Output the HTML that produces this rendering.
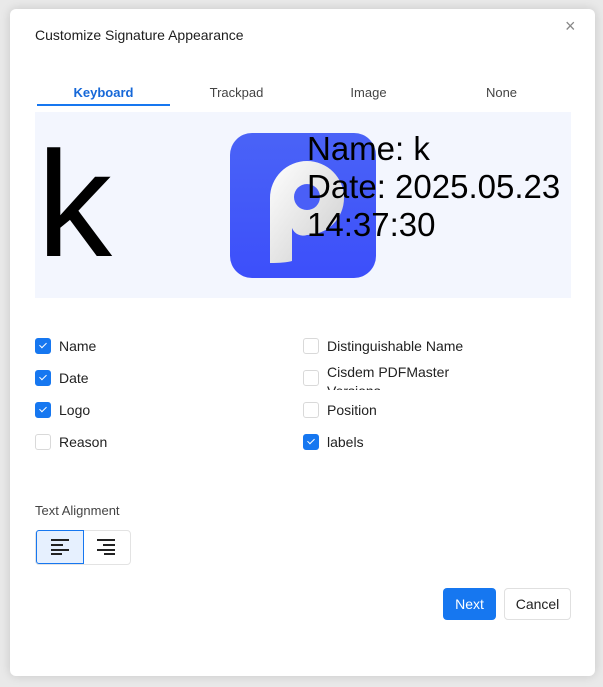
<!DOCTYPE html>
<html><head><style>
body{margin:0;width:603px;height:687px;background:#e9e9e9;position:relative;overflow:hidden;font-family:"Liberation Sans",sans-serif;color:#222;}
.dlg{position:absolute;left:10px;top:9px;width:585px;height:667px;background:#fff;border-radius:6px;box-shadow:0 0 10px rgba(0,0,0,.15);}
.a{position:absolute;}
.cb{position:absolute;width:14px;height:14px;border:1px solid #d9d9d9;border-radius:3px;background:#fff;}
.cb.on{background:#1677f0;border-color:#1677f0;}
.cb.on::after{content:"";position:absolute;left:4.5px;top:2px;width:3px;height:6px;border:solid #fff;border-width:0 1.6px 1.6px 0;transform:rotate(45deg);}
.lb{position:absolute;font-size:14px;color:#222;}
.tab{position:absolute;top:85px;font-size:13px;color:#444;width:133px;text-align:center;}
</style></head><body>
<div class="dlg"></div>
<div class="a" style="left:35px;top:27px;font-size:14px;color:#1d1d1d">Customize Signature Appearance</div>
<div class="a" style="left:565px;top:17px;font-size:18px;color:#888;line-height:18px">×</div>
<div class="tab" style="left:37px;color:#1668d8;font-weight:bold">Keyboard</div>
<div class="tab" style="left:170px">Trackpad</div>
<div class="tab" style="left:302px">Image</div>
<div class="tab" style="left:435px">None</div>
<div class="a" style="left:37px;top:104px;width:133px;height:2px;background:#1677f0"></div>
<div class="a" style="left:35px;top:112px;width:536px;height:186px;background:#f3f6fe;overflow:hidden">
 <div class="a" style="left:2px;top:2px;font-size:150px;line-height:180px;color:#000">k</div>
 <svg class="a" style="left:195px;top:21px" width="146" height="145" viewBox="0 0 146 145">
  <defs><linearGradient id="g" x1="0" y1="0" x2="0" y2="1"><stop offset="0" stop-color="#4a63f7"/><stop offset="1" stop-color="#3c4ffa"/></linearGradient>
  <linearGradient id="w" x1="0" y1="0" x2="1" y2="1"><stop offset="0" stop-color="#fff"/><stop offset="1" stop-color="#ccc"/></linearGradient></defs>
  <rect width="146" height="145" rx="22" fill="url(#g)"/>
  <path d="M40 130 V65 A37 37 0 1 1 77 102 A12 12 0 0 1 62 95 L62 128 Q55 130 40 130Z" fill="url(#w)"/>
  <circle cx="77" cy="64" r="13" fill="#4a5ff7"/>
 </svg>
 <div class="a" style="left:272px;top:18px;font-size:33px;line-height:38px;color:#000">Name: k<br>Date: 2025.05.23<br>14:37:30</div>
</div>
<div class="cb on" style="left:35px;top:338px"></div><div class="lb" style="left:59px;top:338px">Name</div>
<div class="cb on" style="left:35px;top:370px"></div><div class="lb" style="left:59px;top:370px">Date</div>
<div class="cb on" style="left:35px;top:402px"></div><div class="lb" style="left:59px;top:402px">Logo</div>
<div class="cb" style="left:35px;top:434px"></div><div class="lb" style="left:59px;top:434px">Reason</div>
<div class="cb" style="left:303px;top:338px"></div><div class="lb" style="left:327px;top:338px">Distinguishable Name</div>
<div class="cb" style="left:303px;top:370px"></div><div class="lb" style="left:327px;top:363px;height:27px;overflow:hidden;line-height:19px">Cisdem PDFMaster<br>Versions</div>
<div class="cb" style="left:303px;top:402px"></div><div class="lb" style="left:327px;top:402px">Position</div>
<div class="cb on" style="left:303px;top:434px"></div><div class="lb" style="left:327px;top:434px">labels</div>
<div class="a" style="left:35px;top:503px;font-size:13px;color:#444">Text Alignment</div>
<div class="a" style="left:35px;top:530px;width:94px;height:33px;border:1px solid #e3e3e3;border-radius:4px"></div>
<div class="a" style="left:36px;top:530px;width:46px;height:32px;border:1px solid #1677f0;border-radius:3px 0 0 3px;background:#e6f0fe"></div>
<svg class="a" style="left:51px;top:538px" width="20" height="18"><g fill="#222"><rect x="0" y="1" width="18" height="2"/><rect x="0" y="6" width="12" height="2"/><rect x="0" y="11" width="18" height="2"/><rect x="0" y="15" width="11" height="2"/></g></svg>
<svg class="a" style="left:97px;top:538px" width="20" height="18"><g fill="#222"><rect x="0" y="1" width="18" height="2"/><rect x="6" y="6" width="12" height="2"/><rect x="0" y="11" width="18" height="2"/><rect x="7" y="15" width="11" height="2"/></g></svg>
<div class="a" style="left:443px;top:588px;width:53px;height:32px;background:#1677f0;border-radius:4px;color:#fff;font-size:14px;text-align:center;line-height:32px">Next</div>
<div class="a" style="left:504px;top:588px;width:65px;height:30px;border:1px solid #e0e0e0;border-radius:4px;color:#222;font-size:14px;text-align:center;line-height:30px">Cancel</div>
</body></html>
